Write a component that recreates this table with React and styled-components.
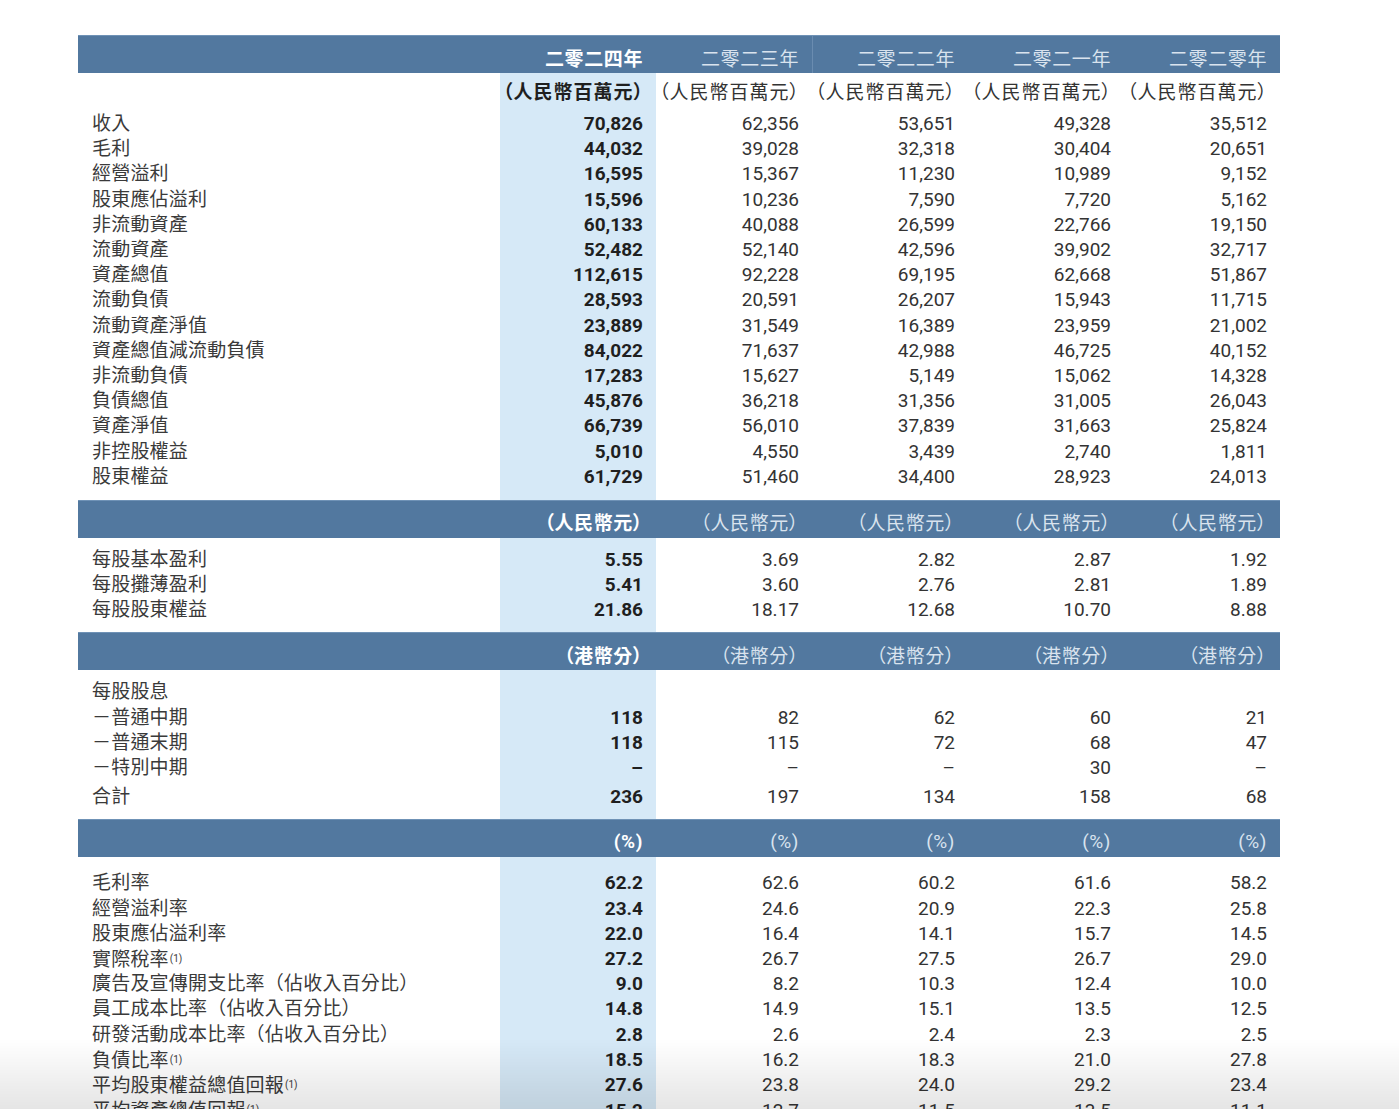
import React from "react";
import styled, { createGlobalStyle } from "styled-components";

const COLS = "422px repeat(5, 156px)";
const BLUE = "#52789f";
const STRIPE = "#d6e9f7";

const GlobalStyle = createGlobalStyle`
  html, body {
    margin: 0;
    padding: 0;
    background: #fff;
    overflow: hidden;
  }
  body {
    font-family: Roboto, "Noto Sans CJK TC", "Noto Sans", sans-serif;
    color: #2b2b2b;
  }
`;

const Page = styled.div`
  padding: 35px 0 0 78px;
`;

const Table = styled.div`
  width: 1202px;
`;

const Bar = styled.div`
  display: grid;
  grid-template-columns: ${COLS};
  height: 38px;
  background: ${BLUE};
  border-top: 1px solid #6f92b6;
  box-sizing: border-box;
`;

const BarCell = styled.div`
  display: flex;
  align-items: center;
  justify-content: flex-end;
  padding: 5px 13px 0 0;
  font-size: 19px;
  letter-spacing: 0.6px;
  font-feature-settings: "palt";
  color: ${(p) => (p.$main ? "#ffffff" : "#d9e3ee")};
  font-weight: ${(p) => (p.$main ? 700 : 400)};
  border-left: ${(p) => (p.$divider ? "1px solid #6a8cb0" : "none")};
`;

const Section = styled.div`
  padding: ${(p) => p.$pad || "9px 0 10px"};
  background: linear-gradient(
    to right,
    transparent 422px,
    ${STRIPE} 422px,
    ${STRIPE} 578px,
    transparent 578px
  );
`;

const Row = styled.div`
  display: grid;
  grid-template-columns: ${COLS};
  height: ${(p) => p.$h || "25.2px"};
  align-items: center;
  margin-top: ${(p) => p.$gap || "0"};
`;

const Label = styled.div`
  padding-left: 14px;
  font-size: 19px;
  letter-spacing: 0.2px;
  line-height: 25px;
  color: #3a3a3a;
  white-space: nowrap;
`;

const Note = styled.sup`
  font-family: Roboto, sans-serif;
  font-size: 10px;
  vertical-align: 4px;
  margin-left: 1px;
  letter-spacing: 0;
`;

const Value = styled.div`
  text-align: right;
  padding-right: 13px;
  font-size: 19px;
  line-height: 25px;
  color: ${(p) => (p.$main ? "#1f1f1f" : "#333")};
  font-weight: ${(p) => (p.$main ? 700 : 400)};
`;

const Unit = styled(Value)`
  font-feature-settings: "palt";
  letter-spacing: 1px;
  padding-right: 12px;
`;

const Shade = styled.div`
  position: fixed;
  left: 0;
  right: 0;
  bottom: 0;
  height: 70px;
  pointer-events: none;
  background: linear-gradient(rgba(0, 0, 0, 0), rgba(0, 0, 0, 0.1));
`;

const years = ["二零二四年", "二零二三年", "二零二二年", "二零二一年", "二零二零年"];

const balance = [
  ["收入", "70,826", "62,356", "53,651", "49,328", "35,512"],
  ["毛利", "44,032", "39,028", "32,318", "30,404", "20,651"],
  ["經營溢利", "16,595", "15,367", "11,230", "10,989", "9,152"],
  ["股東應佔溢利", "15,596", "10,236", "7,590", "7,720", "5,162"],
  ["非流動資產", "60,133", "40,088", "26,599", "22,766", "19,150"],
  ["流動資產", "52,482", "52,140", "42,596", "39,902", "32,717"],
  ["資產總值", "112,615", "92,228", "69,195", "62,668", "51,867"],
  ["流動負債", "28,593", "20,591", "26,207", "15,943", "11,715"],
  ["流動資產淨值", "23,889", "31,549", "16,389", "23,959", "21,002"],
  ["資產總值減流動負債", "84,022", "71,637", "42,988", "46,725", "40,152"],
  ["非流動負債", "17,283", "15,627", "5,149", "15,062", "14,328"],
  ["負債總值", "45,876", "36,218", "31,356", "31,005", "26,043"],
  ["資產淨值", "66,739", "56,010", "37,839", "31,663", "25,824"],
  ["非控股權益", "5,010", "4,550", "3,439", "2,740", "1,811"],
  ["股東權益", "61,729", "51,460", "34,400", "28,923", "24,013"],
];

const perShare = [
  ["每股基本盈利", "5.55", "3.69", "2.82", "2.87", "1.92"],
  ["每股攤薄盈利", "5.41", "3.60", "2.76", "2.81", "1.89"],
  ["每股股東權益", "21.86", "18.17", "12.68", "10.70", "8.88"],
];

const dividends = [
  ["每股股息", "", "", "", "", ""],
  ["－普通中期", "118", "82", "62", "60", "21"],
  ["－普通末期", "118", "115", "72", "68", "47"],
  ["－特別中期", "–", "–", "–", "30", "–"],
  ["合計", "236", "197", "134", "158", "68"],
];

const ratios = [
  ["毛利率", "62.2", "62.6", "60.2", "61.6", "58.2"],
  ["經營溢利率", "23.4", "24.6", "20.9", "22.3", "25.8"],
  ["股東應佔溢利率", "22.0", "16.4", "14.1", "15.7", "14.5"],
  ["實際稅率", "27.2", "26.7", "27.5", "26.7", "29.0", true],
  ["廣告及宣傳開支比率（佔收入百分比）", "9.0", "8.2", "10.3", "12.4", "10.0"],
  ["員工成本比率（佔收入百分比）", "14.8", "14.9", "15.1", "13.5", "12.5"],
  ["研發活動成本比率（佔收入百分比）", "2.8", "2.6", "2.4", "2.3", "2.5"],
  ["負債比率", "18.5", "16.2", "18.3", "21.0", "27.8", true],
  ["平均股東權益總值回報", "27.6", "23.8", "24.0", "29.2", "23.4", true],
  ["平均資產總值回報", "15.2", "12.7", "11.5", "13.5", "11.1", true],
];

const UnitBar = ({ text }) => (
  <Bar>
    <div />
    {years.map((y, i) => (
      <BarCell key={y} $main={i === 0}>
        {text}
      </BarCell>
    ))}
  </Bar>
);

const DataRow = ({ row, gap }) => {
  const [label, ...rest] = row;
  const note = rest[5] === true;
  const values = rest.slice(0, 5);
  return (
    <Row $gap={gap}>
      <Label>
        {label}
        {note && <Note>(1)</Note>}
      </Label>
      {values.map((v, i) => (
        <Value key={i} $main={i === 0}>
          {v}
        </Value>
      ))}
    </Row>
  );
};

const App = () => {
  return (
    <Page>
      <GlobalStyle />
      <Table>
        <Bar>
          <div />
          {years.map((y, i) => (
            <BarCell key={y} $main={i === 0} $divider={i === 2}>
              {y}
            </BarCell>
          ))}
        </Bar>
        <Section $pad="0 0 11px">
          <Row $h="38px">
            <div />
            {years.map((y, i) => (
              <Unit key={y} $main={i === 0}>
                （人民幣百萬元）
              </Unit>
            ))}
          </Row>
          {balance.map((r) => (
            <DataRow key={r[0]} row={r} />
          ))}
        </Section>

        <UnitBar text="（人民幣元）" />
        <Section>
          {perShare.map((r) => (
            <DataRow key={r[0]} row={r} />
          ))}
        </Section>

        <UnitBar text="（港幣分）" />
        <Section>
          {dividends.map((r, i) => (
            <DataRow key={r[0]} row={r} gap={i === 4 ? "4px" : "0"} />
          ))}
        </Section>

        <UnitBar text="(%)" />
        <Section $pad="13px 0 10px">
          {ratios.map((r) => (
            <DataRow key={r[0]} row={r} />
          ))}
        </Section>
      </Table>
      <Shade />
    </Page>
  );
};

export default App;
